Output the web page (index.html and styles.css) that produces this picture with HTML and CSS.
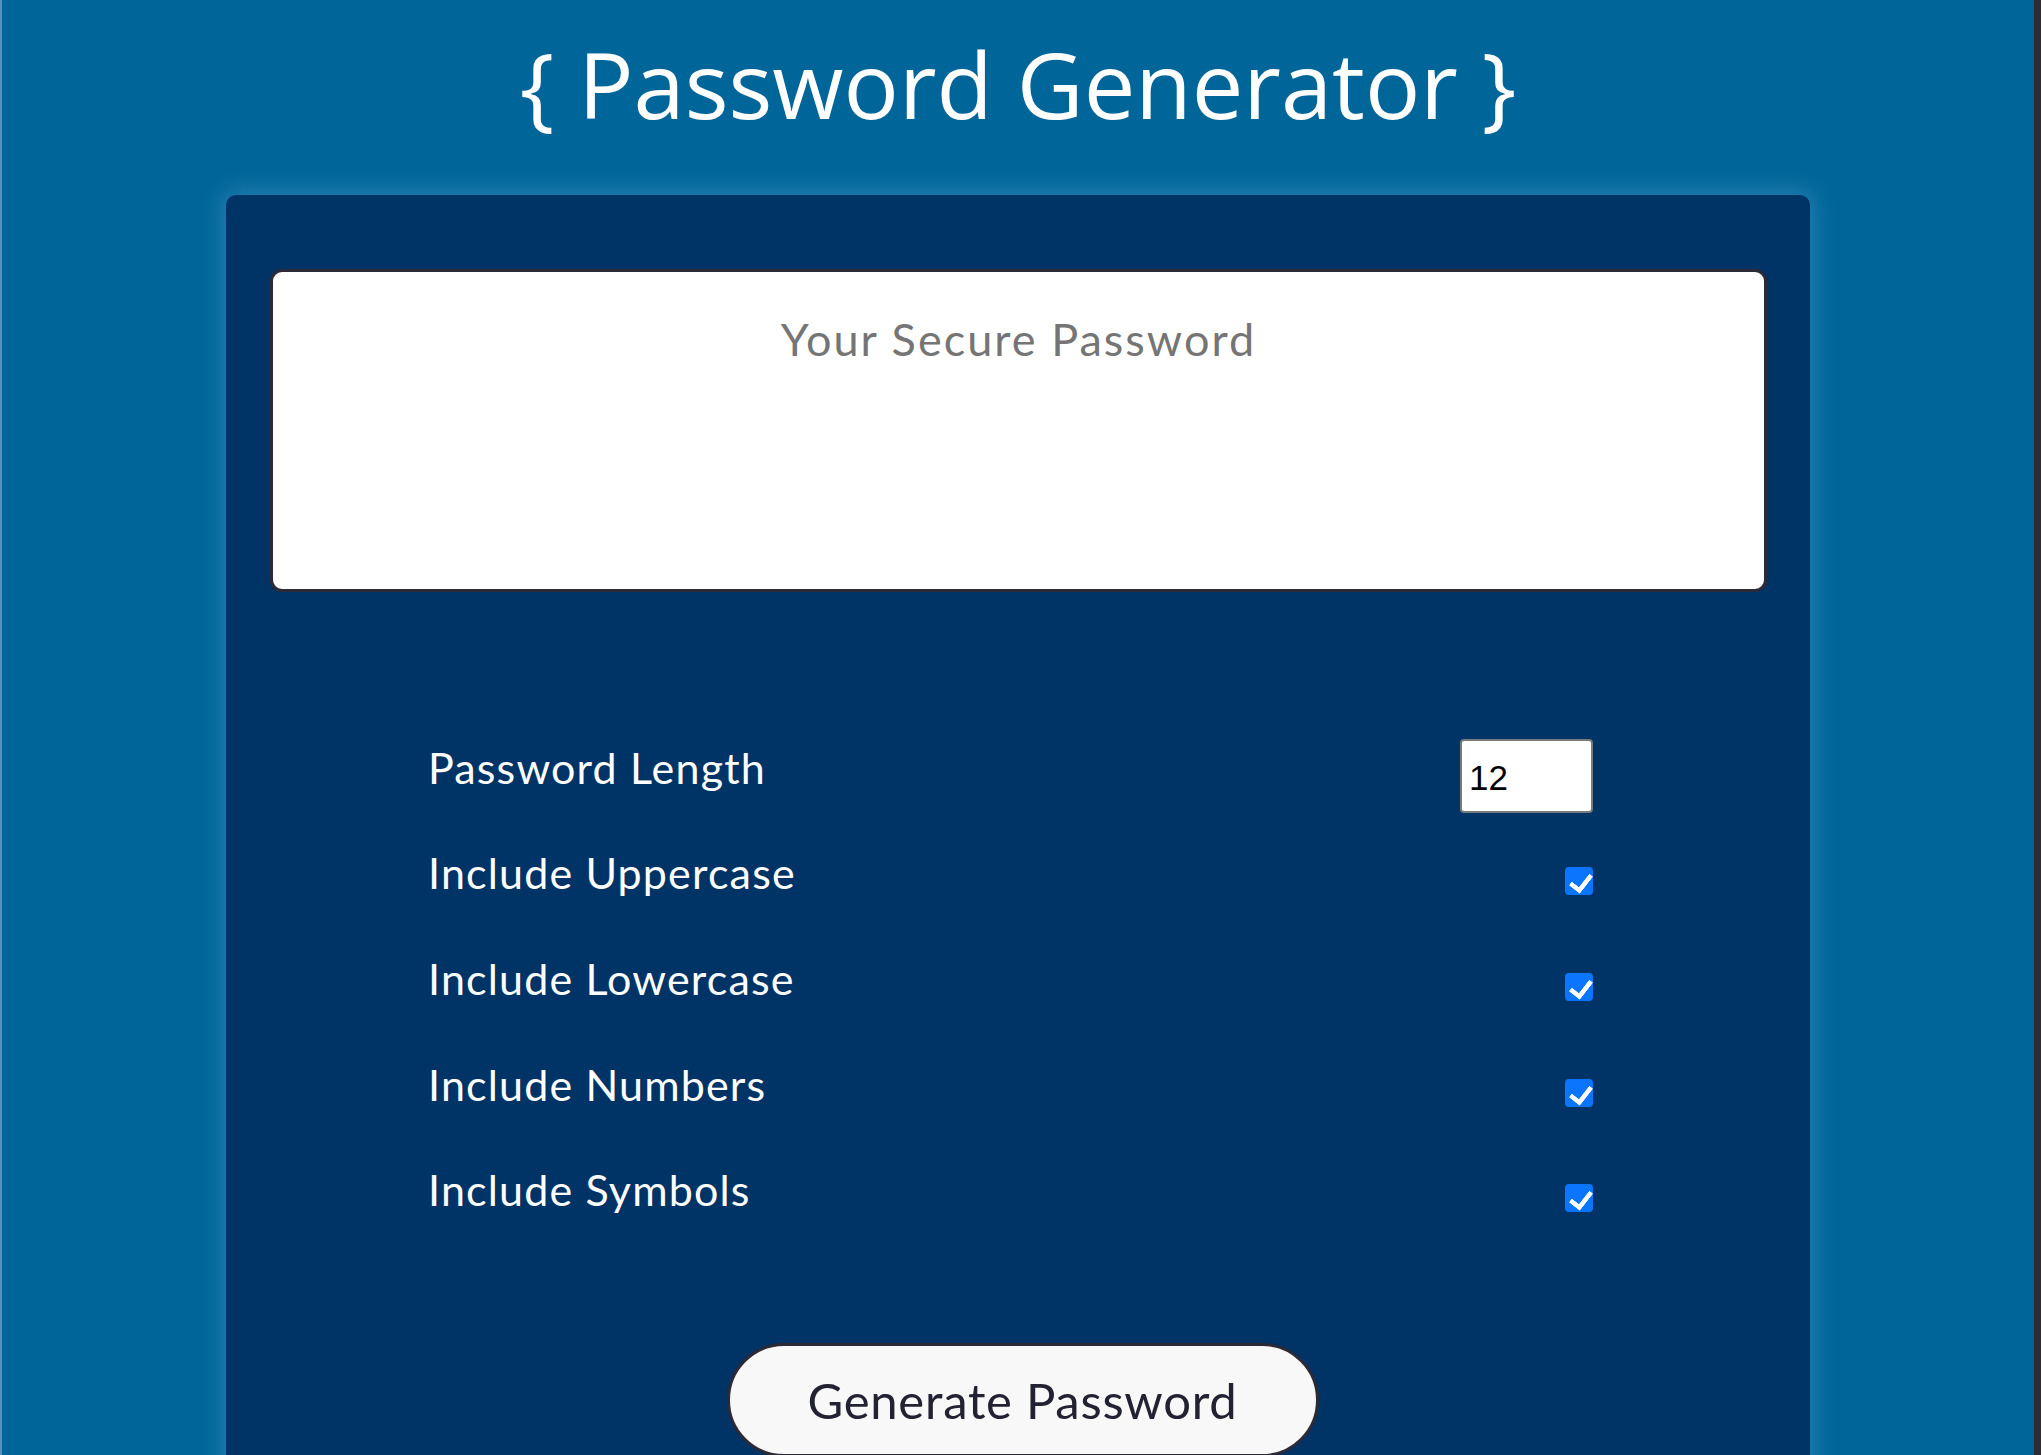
FILE: index.html
```html
<!DOCTYPE html>
<html lang="en">
<head>
<meta charset="utf-8">
<title>Password Generator</title>
<link rel="stylesheet" href="styles.css">
</head>
<body>
  <h1 class="title">{ Password Generator }</h1>
  <main class="card">
    <textarea class="result" placeholder="Your Secure Password" readonly></textarea>
    <div class="settings">
      <div class="row">
        <label class="label" for="length">Password Length</label>
        <input class="num" type="number" id="length" min="4" max="50" value="12">
      </div>
      <div class="row">
        <label class="label" for="upper">Include Uppercase</label>
        <input class="check" type="checkbox" id="upper" checked>
      </div>
      <div class="row">
        <label class="label" for="lower">Include Lowercase</label>
        <input class="check" type="checkbox" id="lower" checked>
      </div>
      <div class="row">
        <label class="label" for="numbers">Include Numbers</label>
        <input class="check" type="checkbox" id="numbers" checked>
      </div>
      <div class="row">
        <label class="label" for="symbols">Include Symbols</label>
        <input class="check" type="checkbox" id="symbols" checked>
      </div>
    </div>
    <button class="generate" type="button">Generate Password</button>
  </main>
</body>
</html>
```
FILE: styles.css
```css
* { box-sizing: border-box; }

html {
  background: #006699;
  height: 100%;
  overflow: hidden;
}

body {
  margin: 0;
  height: 100%;
  overflow: hidden;
  background: #006699;
  border-left: 2px solid #5b8fb6;
  border-right: 7px solid #2d2d2f;
  font-family: Lato, "Open Sans", sans-serif;
  color: #fff;
}

.title {
  margin: 29px 0 0;
  font-family: "Open Sans", sans-serif;
  font-weight: 500;
  font-size: 92px;
  line-height: 110px;
  text-align: center;
  color: #fff;
}

.card {
  width: 1584px;
  margin: 56px auto 0;
  padding: 74px 43px 0 44px;
  min-height: 1400px;
  background: #003366;
  border-radius: 10px;
  box-shadow: 0 0 22px 4px rgba(70, 150, 200, 0.55);
}

.result {
  display: block;
  width: 100%;
  height: 323px;
  padding: 40px 20px 20px;
  border: 3px solid #2c2a36;
  border-radius: 12px;
  background: #fff;
  resize: none;
  outline: none;
  font-family: Lato, sans-serif;
  font-size: 45px;
  line-height: 54px;
  letter-spacing: 0.045em;
  text-align: center;
  color: #333;
}

.result::placeholder {
  color: #757575;
}

.settings {
  margin: 131px 174px 0 158px;
}

.row {
  display: flex;
  align-items: center;
  justify-content: space-between;
  height: 105.6px;
}

.label {
  font-size: 43px;
  line-height: 52px;
  letter-spacing: 0.027em;
  color: #fff;
  margin-bottom: 16px;
}

.num {
  width: 133px;
  height: 74px;
  margin: 0;
  padding: 4px 7px 0;
  border: 2px solid #7a7a7a;
  border-radius: 4px;
  background: #fff;
  font-family: "Liberation Sans", Arial, sans-serif;
  font-size: 35px;
  color: #000;
  -moz-appearance: textfield;
}

.num::-webkit-inner-spin-button,
.num::-webkit-outer-spin-button {
  -webkit-appearance: none;
  margin: 0;
}

.check {
  -webkit-appearance: none;
  appearance: none;
  position: relative;
  width: 28px;
  height: 28px;
  margin: 0;
  border-radius: 4px;
  background: #0b75fe;
}

.check::after {
  content: "";
  position: absolute;
  left: 9px;
  top: 3px;
  width: 9px;
  height: 17px;
  border-right: 5px solid #fff;
  border-bottom: 5px solid #fff;
  border-radius: 1px;
  transform: rotate(38deg);
}

.generate {
  display: block;
  width: 592px;
  height: 114px;
  margin: 92px auto 0;
  padding: 0;
  border: 3px solid #2b2a35;
  border-radius: 60px;
  background: #f8f8f8;
  font-family: Lato, sans-serif;
  font-size: 49px;
  letter-spacing: 0.015em;
  color: #222233;
  cursor: pointer;
  transform: translateX(4px);
}
```
